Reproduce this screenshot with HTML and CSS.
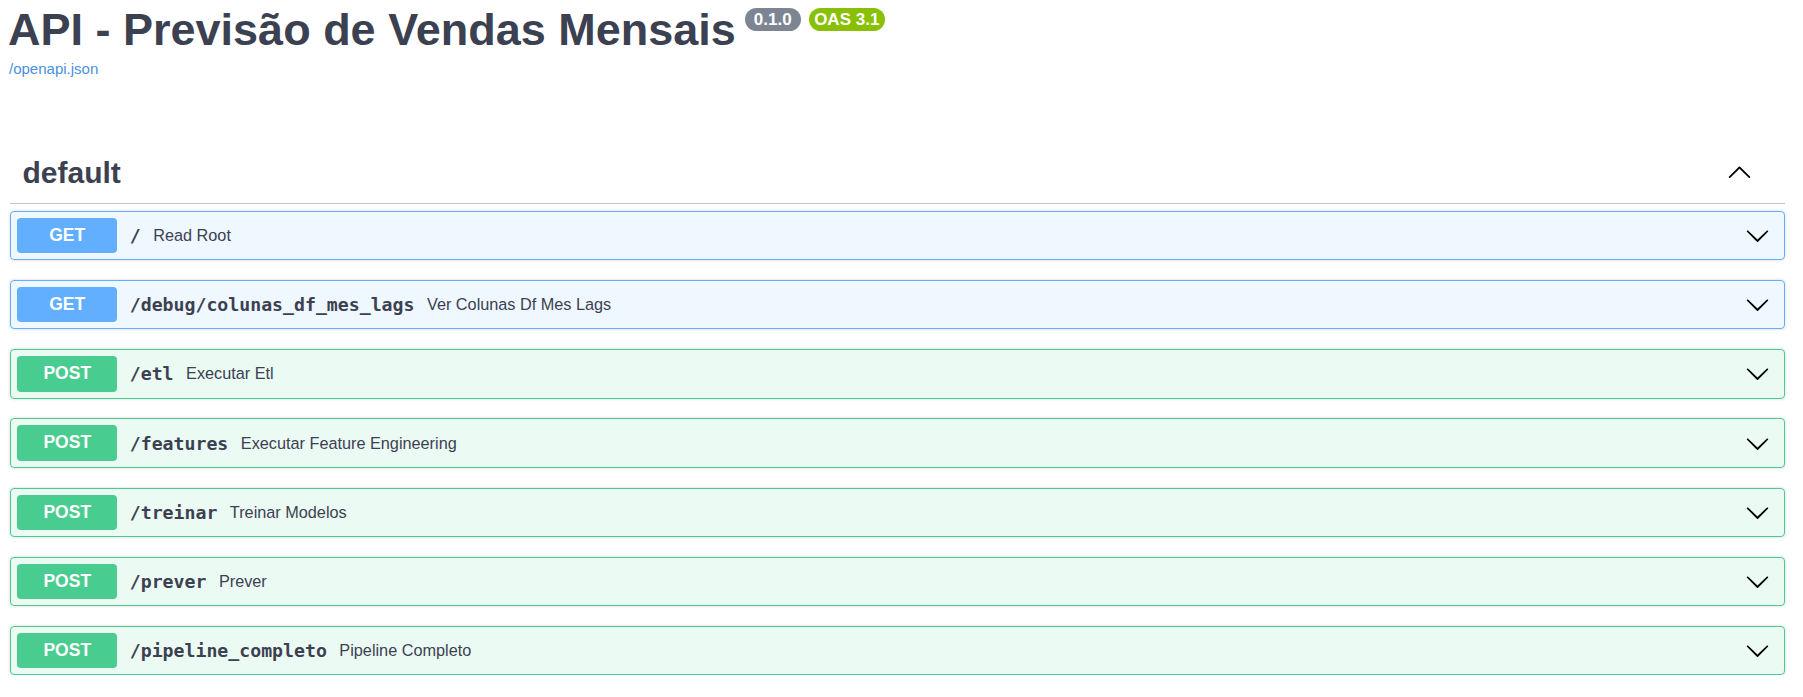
FILE: index.html
```html
<!DOCTYPE html>
<html lang="pt">
<head>
<meta charset="utf-8">
<title>API - Previsão de Vendas Mensais</title>
<link rel="stylesheet" href="styles.css">
</head>
<body>
<div class="page">
  <div class="info">
    <h2 class="title"><span class="title-text">API - Previsão de Vendas Mensais</span><small class="badge badge-ver">0.1.0</small><small class="badge badge-oas">OAS 3.1</small></h2>
    <a class="link" href="#">/openapi.json</a>
  </div>

  <section class="tag-section">
    <h3 class="tag">
      <span class="tag-name">default</span>
      <span class="tag-arrow">
        <svg width="25" height="25" viewBox="0 0 20 20" aria-hidden="true"><path d="M17.418 14.908c.272.268.709.268.979 0s.271-.701 0-.969l-7.908-7.83c-.27-.268-.707-.268-.979 0l-7.908 7.83c-.27.268-.27.701 0 .969.271.268.709.268.979 0L10 7.768l7.418 7.14z"/></svg>
      </span>
    </h3>

    <div class="ops">
      <div class="op op-get">
        <span class="method">GET</span>
        <span class="path">/</span>
        <span class="desc">Read Root</span>
        <span class="op-arrow"><svg width="25" height="25" viewBox="0 0 20 20" aria-hidden="true"><path d="M17.418 6.109c.272-.268.709-.268.979 0s.271.701 0 .969l-7.908 7.83c-.27.268-.707.268-.979 0l-7.908-7.83c-.27-.268-.27-.701 0-.969.271-.268.709-.268.979 0L10 13.25l7.418-7.141z"/></svg></span>
      </div>
      <div class="op op-get">
        <span class="method">GET</span>
        <span class="path">/debug/colunas_df_mes_lags</span>
        <span class="desc">Ver Colunas Df Mes Lags</span>
        <span class="op-arrow"><svg width="25" height="25" viewBox="0 0 20 20" aria-hidden="true"><path d="M17.418 6.109c.272-.268.709-.268.979 0s.271.701 0 .969l-7.908 7.83c-.27.268-.707.268-.979 0l-7.908-7.83c-.27-.268-.27-.701 0-.969.271-.268.709-.268.979 0L10 13.25l7.418-7.141z"/></svg></span>
      </div>
      <div class="op op-post">
        <span class="method">POST</span>
        <span class="path">/etl</span>
        <span class="desc">Executar Etl</span>
        <span class="op-arrow"><svg width="25" height="25" viewBox="0 0 20 20" aria-hidden="true"><path d="M17.418 6.109c.272-.268.709-.268.979 0s.271.701 0 .969l-7.908 7.83c-.27.268-.707.268-.979 0l-7.908-7.83c-.27-.268-.27-.701 0-.969.271-.268.709-.268.979 0L10 13.25l7.418-7.141z"/></svg></span>
      </div>
      <div class="op op-post">
        <span class="method">POST</span>
        <span class="path">/features</span>
        <span class="desc">Executar Feature Engineering</span>
        <span class="op-arrow"><svg width="25" height="25" viewBox="0 0 20 20" aria-hidden="true"><path d="M17.418 6.109c.272-.268.709-.268.979 0s.271.701 0 .969l-7.908 7.83c-.27.268-.707.268-.979 0l-7.908-7.83c-.27-.268-.27-.701 0-.969.271-.268.709-.268.979 0L10 13.25l7.418-7.141z"/></svg></span>
      </div>
      <div class="op op-post">
        <span class="method">POST</span>
        <span class="path">/treinar</span>
        <span class="desc">Treinar Modelos</span>
        <span class="op-arrow"><svg width="25" height="25" viewBox="0 0 20 20" aria-hidden="true"><path d="M17.418 6.109c.272-.268.709-.268.979 0s.271.701 0 .969l-7.908 7.83c-.27.268-.707.268-.979 0l-7.908-7.83c-.27-.268-.27-.701 0-.969.271-.268.709-.268.979 0L10 13.25l7.418-7.141z"/></svg></span>
      </div>
      <div class="op op-post">
        <span class="method">POST</span>
        <span class="path">/prever</span>
        <span class="desc">Prever</span>
        <span class="op-arrow"><svg width="25" height="25" viewBox="0 0 20 20" aria-hidden="true"><path d="M17.418 6.109c.272-.268.709-.268.979 0s.271.701 0 .969l-7.908 7.83c-.27.268-.707.268-.979 0l-7.908-7.83c-.27-.268-.27-.701 0-.969.271-.268.709-.268.979 0L10 13.25l7.418-7.141z"/></svg></span>
      </div>
      <div class="op op-post">
        <span class="method">POST</span>
        <span class="path">/pipeline_completo</span>
        <span class="desc">Pipeline Completo</span>
        <span class="op-arrow"><svg width="25" height="25" viewBox="0 0 20 20" aria-hidden="true"><path d="M17.418 6.109c.272-.268.709-.268.979 0s.271.701 0 .969l-7.908 7.83c-.27.268-.707.268-.979 0l-7.908-7.83c-.27-.268-.27-.701 0-.969.271-.268.709-.268.979 0L10 13.25l7.418-7.141z"/></svg></span>
      </div>
    </div>
  </section>
</div>
</body>
</html>
```

FILE: styles.css
```css
* {
  box-sizing: border-box;
}

html, body {
  margin: 0;
  padding: 0;
  background: #ffffff;
}

body {
  font-family: "Liberation Sans", Arial, sans-serif;
  color: #3b4151;
}

.page {
  width: 1785px;
  padding-left: 10px;
}

/* ---------- info ---------- */
.info {
  display: flex;
  flex-direction: column;
  align-items: flex-start;
}

.title {
  display: flex;
  align-items: flex-start;
  margin: 4px 0 0 -2px;
  font-size: 45px;
  line-height: 52px;
  font-weight: bold;
  color: #3b4151;
}

.badge {
  display: inline-block;
  margin-top: 4px;
  margin-left: 9px;
  height: 23px;
  line-height: 23px;
  border-radius: 57px;
  font-size: 17px;
  font-weight: bold;
  color: #ffffff;
  font-family: "Liberation Sans", Arial, sans-serif;
}

.badge-ver {
  background: #7d8492;
  padding: 0 9px;
}

.badge-oas {
  background: #89bf04;
  padding: 0 5.5px;
  margin-left: 8px;
}

.link {
  margin-top: 4px;
  margin-left: -1px;
  font-size: 15px;
  color: #4990e2;
  text-decoration: none;
}

/* ---------- tag section ---------- */
.tag-section {
  margin-top: 66px;
}

.tag {
  display: flex;
  align-items: center;
  margin: 0;
  padding: 12.5px 32.7px 13.7px 12.5px;
  border-bottom: 1px solid rgba(59, 65, 81, 0.3);
  font-size: 30px;
  font-weight: bold;
  color: #3b4151;
}

.tag-name {
  flex: 1;
}

.tag-arrow {
  display: flex;
  margin-bottom: 3px;
}

.tag-arrow svg,
.op-arrow svg {
  fill: #000000;
}

/* ---------- operations ---------- */
.ops {
  display: flex;
  flex-direction: column;
  gap: 19.9px;
  padding-top: 6.7px;
}

.op {
  display: flex;
  align-items: center;
  height: 49.3px;
  padding: 0 13.75px 0 6.25px;
  border: 1px solid;
  border-radius: 4px;
  box-shadow: 0 0 3px rgba(0, 0, 0, 0.19);
}

.op-get {
  background: rgba(97, 175, 254, 0.1);
  border-color: #61affe;
}

.op-post {
  background: rgba(73, 204, 144, 0.1);
  border-color: #49cc90;
}

.method {
  flex: none;
  width: 100px;
  height: 35.3px;
  line-height: 35.3px;
  border-radius: 4px;
  text-align: center;
  font-size: 17.5px;
  font-weight: bold;
  color: #ffffff;
}

.op-get .method {
  background: #61affe;
}

.op-post .method {
  background: #49cc90;
}

.path {
  padding: 0 12.5px;
  font-family: "DejaVu Sans Mono", "Liberation Mono", monospace;
  font-size: 18.2px;
  font-weight: bold;
  color: #3b4151;
}

.desc {
  flex: 1;
  font-size: 16.25px;
  color: #3b4151;
}

.op-arrow {
  display: flex;
}
```
